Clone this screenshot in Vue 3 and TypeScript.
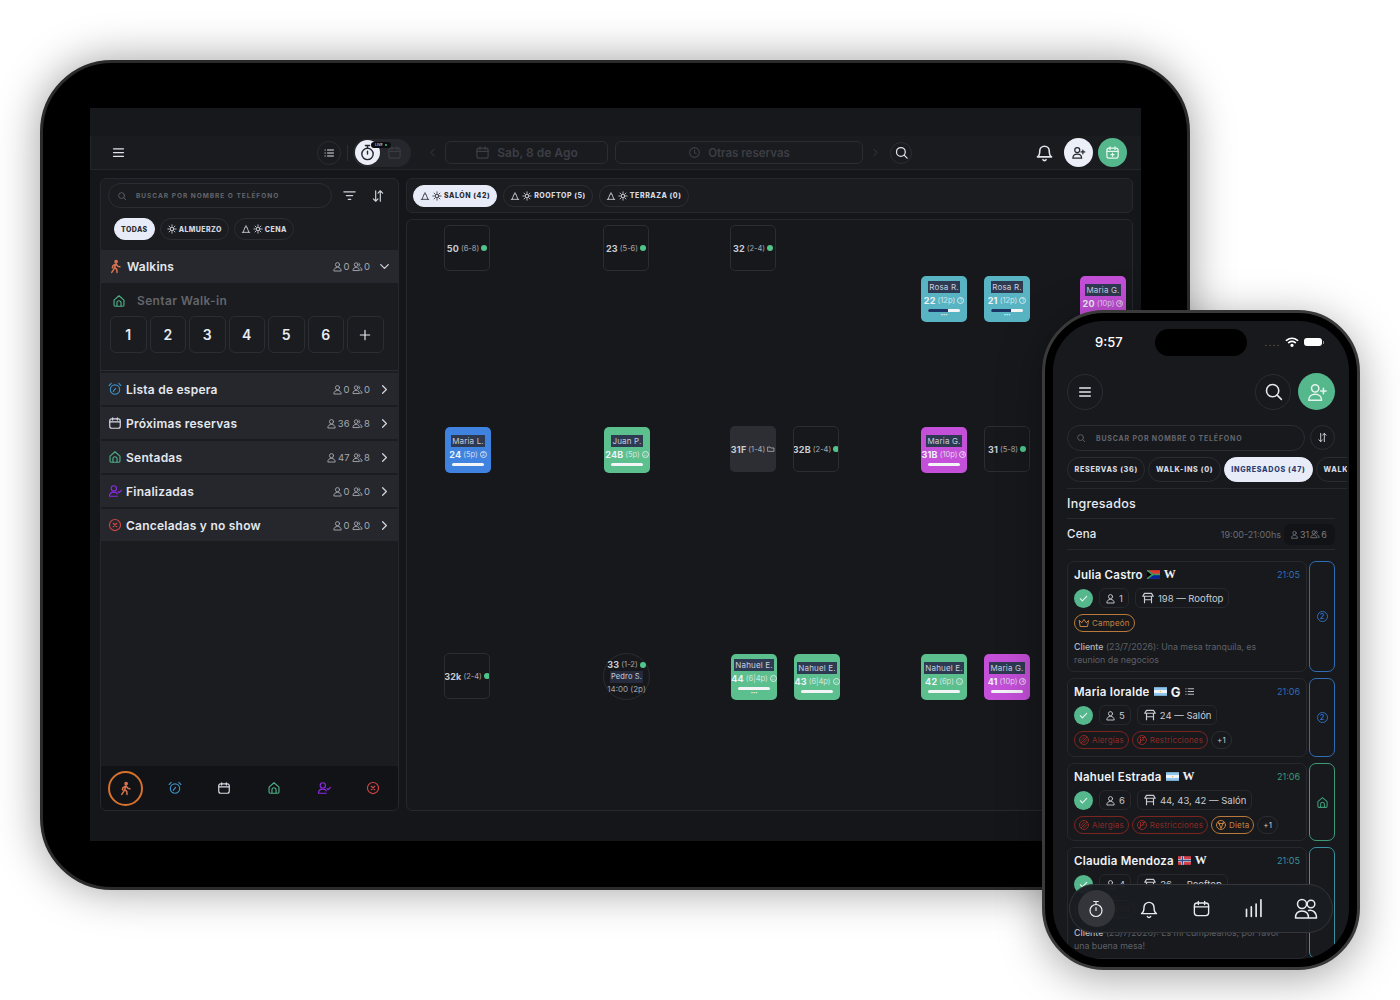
<script setup lang="ts">
import { h, type FunctionalComponent } from 'vue'

const paths: Record<string, string> = {
  menu: '<path d="M4 6h16M4 12h16M4 18h16"/>',
  list: '<path d="M9 6h12M9 12h12M9 18h12M4 6h.5M4 12h.5M4 18h.5"/>',
  watch: '<circle cx="12" cy="14" r="8"/><path d="M12 14v-4M9 2h6M12 2v4"/>',
  calendar: '<rect x="3" y="5" width="18" height="16" rx="3.5"/><path d="M8 3v4M16 3v4M3 10h18"/>',
  calplus: '<rect x="3" y="5" width="18" height="16" rx="3.5"/><path d="M8 3v4M16 3v4M3 10h18M12 13v5M9.5 15.5h5"/>',
  clock: '<circle cx="12" cy="12" r="9"/><path d="M12 7v5l3 2"/>',
  bell: '<path d="M6 10a6 6 0 0 1 12 0c0 6 3 7.500 3 7.500H3S6 16 6 10zM10 21a2.200 2.200 0 0 0 4 0"/>',
  userplus: '<circle cx="10" cy="8" r="4"/><path d="M3 21c0-4 3-6.500 7-6.500s7 2.500 7 6.500zM19 8v6M16 11h6"/>',
  search: '<circle cx="11" cy="11" r="7"/><path d="M21 21l-4.800-4.800"/>',
  user: '<circle cx="12" cy="8" r="4.500"/><path d="M4 21c0-4.500 3.500-7 8-7s8 2.500 8 7z"/>',
  users: '<circle cx="9" cy="8" r="4"/><path d="M2 20c0-4 3-6 7-6s7 2 7 6zM15 4.500a4 4 0 0 1 0 7M18 14.500c2.500.7 4 2.500 4 5.500h-3"/>',
  walker: '<circle cx="13" cy="4" r="1.800" fill="currentColor"/><path d="M13 8l-2.500 5.500 3.500 3 .5 5M10.500 13.500L9 17l-3 4.500M12.500 8L8 10.500 7 14M13 8l2.500 3.500 3.500 1"/>',
  alarm: '<circle cx="12" cy="13" r="8"/><path d="M5.500 2.500L2 6M18.500 2.500L22 6M9 16l4-5"/>',
  home: '<path d="M3.500 10.500L12 3l8.500 7.500V19a2 2 0 0 1-2 2h-13a2 2 0 0 1-2-2zM8.500 21v-6a3.500 3.500 0 0 1 7 0v6"/>',
  usercheck: '<circle cx="10" cy="7.500" r="4.500"/><path d="M2.500 21c0-4.500 3-7 7.500-7 3 0 5 1 6 3M2.500 21H16M17 13l2 2 4-4"/>',
  xcircle: '<circle cx="12" cy="12" r="9.500"/><path d="M9 9l6 6M15 9l-6 6"/>',
  down: '<path d="M5 8.500l7 7 7-7"/>',
  right: '<path d="M8.500 5l7 7-7 7"/>',
  left: '<path d="M15.500 5l-7 7 7 7"/>',
  filter: '<path d="M3 6h18M7 12h10M10 18h4"/>',
  sort: '<path d="M8 3v18M4 17l4 4 4-4M16 21V3M12 7l4-4 4 4"/>',
  service: '<path d="M3 20h18M5 20L10 7h4l5 13M12 7V4"/>',
  sun: '<circle cx="12" cy="12" r="4"/><path d="M12 2v4M12 18v4M2 12h4M18 12h4M5 5l3 3M16 16l3 3M5 19l3-3M16 8l3-3"/>',
  table: '<path d="M6 4h12l3 5H3zM6 9v11M18 9v11M6 15h12"/>',
  crown: '<path d="M3 7l4.500 4.500L12 5l4.500 6.500L21 7l-2 12H5z"/>',
  check: '<path d="M5 12.500l4.500 4.500L19 7.500"/>',
  plus: '<path d="M12 4v16M4 12h16"/>',
  bars: '<path d="M4 21v-8M9.500 21V10M15 21V7M20.500 21V2"/>',
  friends: '<circle cx="8" cy="7" r="4.500"/><circle cx="17" cy="7" r="3.800"/><path d="M1.500 21c0-4.500 2.500-7 6.500-7s6.500 2.500 6.500 7zM14.500 13.500c4-1 8 1.500 8 7.500h-8"/>',
  alergy: '<circle cx="12" cy="12" r="9"/><path d="M6 18L18 6M6 13l7-7M11 18l7-7"/>',
  restrict: '<circle cx="12" cy="12" r="9"/><path d="M9 7v10M13 7h3M13 12h3M6 18L18 6"/>',
  diet: '<circle cx="12" cy="12" r="9"/><path d="M7 6l5 13 5-13M7 9h10"/>',
  folder: '<path d="M3 6h6l2 3h10v10H3z"/>',
}

const flags: Record<string, string> = {
  za: '<rect width="24" height="16" fill="#de3831"/><rect y="8" width="24" height="8" fill="#002395"/><path d="M0 0l10 8-10 8" fill="#000"/><path d="M0 0l11 8L0 16M11 8h13" fill="none" stroke="#3c9a5f" stroke-width="3"/>',
  ar: '<rect width="24" height="16" fill="#8fc5ec"/><rect y="5.300" width="24" height="5.400" fill="#f4f6fa"/><circle cx="12" cy="8" r="1.400" fill="#eac24f"/>',
  no: '<rect width="24" height="16" fill="#d2404a"/><path d="M0 8h24M8 0v16" stroke="#f2f2f2" stroke-width="5"/><path d="M0 8h24M8 0v16" stroke="#2f4c86" stroke-width="2.600"/>',
}

const Ico: FunctionalComponent<{ name: string; size?: number; sw?: number }> = (p) =>
  h('svg', {
    width: p.size ?? 12,
    height: p.size ?? 12,
    viewBox: '0 0 24 24',
    fill: 'none',
    stroke: 'currentColor',
    'stroke-width': p.sw ?? 2,
    'stroke-linecap': 'round',
    'stroke-linejoin': 'round',
    innerHTML: paths[p.name],
  })

const Flag: FunctionalComponent<{ code: string }> = (p) =>
  h('svg', { width: 13, height: 9, viewBox: '0 0 24 16', innerHTML: flags[p.code] })

interface Row {
  label: string
  icon: string
  color: string
  people: number
  groups: number
}

const rows: Row[] = [
  { label: 'Lista de espera', icon: 'alarm', color: '#3d8fc4', people: 0, groups: 0 },
  { label: 'Próximas reservas', icon: 'calendar', color: '#d7dbe6', people: 36, groups: 8 },
  { label: 'Sentadas', icon: 'home', color: '#4fae85', people: 47, groups: 8 },
  { label: 'Finalizadas', icon: 'usercheck', color: '#8a2be2', people: 0, groups: 0 },
  { label: 'Canceladas y no show', icon: 'xcircle', color: '#d24545', people: 0, groups: 0 },
]

const navIcons = [
  { icon: 'alarm', color: '#3d8fc4' },
  { icon: 'calendar', color: '#d7dbe6' },
  { icon: 'home', color: '#4fae85' },
  { icon: 'usercheck', color: '#8a2be2' },
  { icon: 'xcircle', color: '#d24545' },
]

interface Tile {
  x: number
  y: number
  num: string
  cap: string
  kind: 'free' | 'blocked' | 'teal' | 'pink' | 'blue' | 'green'
  name?: string
  mark?: string
  dots?: boolean
}

const tiles: Tile[] = [
  { x: 444, y: 225, num: '50', cap: '(6-8)', kind: 'free' },
  { x: 603, y: 225, num: '23', cap: '(5-6)', kind: 'free' },
  { x: 730, y: 225, num: '32', cap: '(2-4)', kind: 'free' },
  { x: 921, y: 276, num: '22', cap: '(12p)', kind: 'teal', name: 'Rosa R.', mark: '1', dots: true },
  { x: 984, y: 276, num: '21', cap: '(12p)', kind: 'teal', name: 'Rosa R.', mark: '1', dots: true },
  { x: 1080, y: 276, num: '20', cap: '(10p)', kind: 'pink', name: 'Maria G.', mark: '4' },
  { x: 445, y: 427, num: '24', cap: '(5p)', kind: 'blue', name: 'Maria L.', mark: '2' },
  { x: 604, y: 427, num: '24B', cap: '(5p)', kind: 'green', name: 'Juan P.', mark: '⌂' },
  { x: 730, y: 426, num: '31F', cap: '(1-4)', kind: 'blocked' },
  { x: 793, y: 426, num: '32B', cap: '(2-4)', kind: 'free' },
  { x: 921, y: 427, num: '31B', cap: '(10p)', kind: 'pink', name: 'Maria G.', mark: '4' },
  { x: 984, y: 426, num: '31', cap: '(5-8)', kind: 'free' },
  { x: 444, y: 653, num: '32k', cap: '(2-4)', kind: 'free' },
  { x: 731, y: 654, num: '44', cap: '(6|4p)', kind: 'green', name: 'Nahuel E.', mark: '⌂', dots: true },
  { x: 794, y: 654, num: '43', cap: '(6|4p)', kind: 'green', name: 'Nahuel E.', mark: '⌂' },
  { x: 921, y: 654, num: '42', cap: '(6p)', kind: 'green', name: 'Nahuel E.', mark: '⌂' },
  { x: 984, y: 654, num: '41', cap: '(10p)', kind: 'pink', name: 'Maria G.', mark: '4' },
]

interface Tag {
  text: string
  icon?: string
  tone: 'red' | 'orange' | 'plain'
}

interface Booking {
  name: string
  flag: string
  source: string
  list?: boolean
  time: string
  tone: string
  party: number
  table: string
  tags: Tag[]
  note?: string
  height: number
  side: 'two' | 'home' | 'none'
}

const alergias: Tag = { text: 'Alergias', icon: 'alergy', tone: 'red' }
const restricciones: Tag = { text: 'Restricciones', icon: 'restrict', tone: 'red' }

const bookings: Booking[] = [
  {
    name: 'Julia Castro', flag: 'za', source: 'W', time: '21:05', tone: '#2f6db5', party: 1, table: '198 — Rooftop',
    tags: [{ text: 'Campeón', icon: 'crown', tone: 'orange' }],
    note: '(23/7/2026): Una mesa tranquila, es reunion de negocios', height: 111, side: 'two',
  },
  {
    name: 'Maria Ioralde', flag: 'ar', source: 'G', list: true, time: '21:06', tone: '#2f6db5', party: 5, table: '24 — Salón',
    tags: [alergias, restricciones, { text: '+1', tone: 'plain' }], height: 79, side: 'two',
  },
  {
    name: 'Nahuel Estrada', flag: 'ar', source: 'W', time: '21:06', tone: '#3f9a75', party: 6, table: '44, 43, 42 — Salón',
    tags: [alergias, restricciones, { text: 'Dieta', icon: 'diet', tone: 'orange' }, { text: '+1', tone: 'plain' }],
    height: 78, side: 'home',
  },
  {
    name: 'Claudia Mendoza', flag: 'no', source: 'W', time: '21:05', tone: '#3a8f9c', party: 4, table: '26 — Rooftop',
    tags: [{ text: 'Campeón', icon: 'crown', tone: 'orange' }],
    note: '(23/7/2026): Es mi cumpleaños, por favor una buena mesa!', height: 112, side: 'none',
  },
]
</script>

<template>
  <div class="stage">
    <div class="tablet">
      <div class="screen">
        <div class="strip"></div>
        <header class="bar">
          <span class="bar-menu"><Ico name="menu" :size="15" /></span>
          <span class="ring"><Ico name="list" :size="12" /></span>
          <span class="vline"></span>
          <div class="toggle">
            <span class="toggle-on"><Ico name="watch" :size="17" /></span>
            <span class="live">LIVE <i></i></span>
            <Ico class="dim" name="calendar" :size="15" />
          </div>
          <Ico class="dim nav-left" name="left" :size="11" />
          <div class="dim-field date"><Ico name="calendar" :size="15" /> Sab, 8 de Ago</div>
          <div class="dim-field other"><Ico name="clock" :size="13" /> Otras reservas</div>
          <Ico class="dim nav-right" name="right" :size="11" />
          <span class="ring search-ring"><Ico name="search" :size="15" /></span>
          <span class="bell"><Ico name="bell" :size="19" /></span>
          <span class="round white"><Ico name="userplus" :size="15" /></span>
          <span class="round mint"><Ico name="calplus" :size="15" /></span>
        </header>

        <div class="body">
          <aside class="side">
            <div class="find">
              <div class="find-input"><Ico name="search" :size="10" /><span>BUSCAR POR NOMBRE O TELÉFONO</span></div>
              <Ico class="find-icon" name="filter" :size="15" />
              <Ico class="find-icon sort" name="sort" :size="14" />
            </div>
            <div class="chips">
              <span class="chip on">TODAS</span>
              <span class="chip"><Ico name="sun" :size="10" />ALMUERZO</span>
              <span class="chip"><Ico name="service" :size="10" /><Ico name="sun" :size="10" />CENA</span>
            </div>

            <div class="row head">
              <Ico name="walker" :size="15" class="walker" :sw="2.4" />
              <span class="row-label">Walkins</span>
              <span class="count"><Ico name="user" :size="11" />0<Ico name="users" :size="11" />0</span>
              <Ico class="chev" name="down" :size="13" />
            </div>
            <div class="walkin">
              <div class="walkin-title"><Ico name="home" :size="14" />Sentar Walk-in</div>
              <div class="nums">
                <span v-for="n in 6" :key="n" class="num">{{ n }}</span>
                <span class="num"><Ico name="plus" :size="14" /></span>
              </div>
            </div>

            <div class="rows">
              <div v-for="r in rows" :key="r.label" class="row">
                <Ico :name="r.icon" :size="14" :style="{ color: r.color }" />
                <span class="row-label">{{ r.label }}</span>
                <span class="count"><Ico name="user" :size="11" />{{ r.people }}<Ico name="users" :size="11" />{{ r.groups }}</span>
                <Ico class="chev" name="right" :size="13" />
              </div>
            </div>

            <nav class="side-nav">
              <span class="walk-on"><Ico name="walker" :size="15" class="walker" :sw="2.4" /></span>
              <span v-for="n in navIcons" :key="n.icon" class="nav-cell">
                <Ico :name="n.icon" :size="14" :style="{ color: n.color }" />
              </span>
            </nav>
          </aside>

          <main class="main">
            <div class="zones">
              <span class="chip on"><Ico name="service" :size="10" /><Ico name="sun" :size="10" />SALÓN (42)</span>
              <span class="chip"><Ico name="service" :size="10" /><Ico name="sun" :size="10" />ROOFTOP (5)</span>
              <span class="chip"><Ico name="service" :size="10" /><Ico name="sun" :size="10" />TERRAZA (0)</span>
            </div>
            <div class="floor">
              <div
                v-for="t in tiles"
                :key="t.num + t.x"
                class="tile"
                :class="t.kind"
                :style="{ left: t.x - 407 + 'px', top: t.y - 220 + 'px' }"
              >
                <template v-if="t.name">
                  <span class="tile-name">{{ t.name }}</span>
                  <span class="tile-line"><b>{{ t.num }}</b> <small>{{ t.cap }}</small> <em>{{ t.mark }}</em></span>
                  <span class="tile-bar"><i v-if="t.kind === 'teal'"></i></span>
                  <span v-if="t.dots" class="tile-dots">•••</span>
                </template>
                <span v-else class="tile-line plain">
                  <b>{{ t.num }}</b> <small>{{ t.cap }}</small>
                  <Ico v-if="t.kind === 'blocked'" name="folder" :size="8" />
                  <i v-else class="dot"></i>
                </span>
              </div>
              <div class="tile-round">
                <span class="tile-line plain"><b>33</b> <small>(1-2)</small> <i class="dot"></i></span>
                <span class="tile-name soft">Pedro S.</span>
                <span class="round-time">14:00 (2p)</span>
              </div>
            </div>
          </main>
        </div>
      </div>
    </div>

    <div class="phone">
      <div class="phone-screen">
        <div class="status">
          <span class="clock">9:57</span>
          <span class="island"></span>
          <span class="signal">....</span>
          <svg width="14" height="10" viewBox="0 0 24 18" fill="none" stroke="#fff" stroke-width="3" stroke-linecap="round">
            <path d="M2 6c6-5 14-5 20 0M6 10c4-3 8-3 12 0" />
            <circle cx="12" cy="15" r="1.500" fill="#fff" />
          </svg>
          <span class="battery"></span>
        </div>

        <div class="p-head">
          <span class="p-ring"><Ico name="menu" :size="16" /></span>
          <span class="p-ring push"><Ico name="search" :size="21" :sw="1.8" /></span>
          <span class="p-mint"><Ico name="userplus" :size="22" :sw="1.7" /></span>
        </div>

        <div class="p-find">
          <div class="p-input"><Ico name="search" :size="10" /><span>BUSCAR POR NOMBRE O TELÉFONO</span></div>
          <span class="p-sort"><Ico name="sort" :size="11" /></span>
        </div>

        <div class="p-chips">
          <span class="p-chip">RESERVAS (36)</span>
          <span class="p-chip">WALK-INS (0)</span>
          <span class="p-chip on">INGRESADOS (47)</span>
          <span class="p-chip last">WALK</span>
        </div>

        <h2 class="p-title">Ingresados</h2>
        <div class="p-shift">
          <span class="p-shift-name">Cena</span>
          <span class="p-shift-time">19:00-21:00hs</span>
          <span class="p-shift-count"><Ico name="user" :size="9" />31 <Ico name="users" :size="10" />6</span>
        </div>

        <div class="cards">
          <div v-for="b in bookings" :key="b.name" class="line" :style="{ height: b.height + 'px' }">
            <article class="card">
              <div class="card-top">
                <span class="card-name">{{ b.name }}</span>
                <Flag :code="b.flag" />
                <span class="source" :class="{ google: b.source === 'G' }">{{ b.source }}</span>
                <Ico v-if="b.list" class="card-list" name="list" :size="11" />
                <span class="card-time" :style="{ color: b.tone }">{{ b.time }}</span>
              </div>
              <div class="card-meta">
                <span class="tick"><Ico name="check" :size="11" :sw="2.4" /></span>
                <span class="meta"><Ico name="user" :size="11" />{{ b.party }}</span>
                <span class="meta"><Ico name="table" :size="14" />{{ b.table }}</span>
              </div>
              <div class="card-tags">
                <span v-for="t in b.tags" :key="t.text" class="tag" :class="t.tone">
                  <Ico v-if="t.icon" :name="t.icon" :size="12" />{{ t.text }}
                </span>
              </div>
              <p v-if="b.note" class="note"><b>Cliente</b> {{ b.note }}</p>
            </article>
            <div class="side-tab" :style="{ color: b.tone, borderColor: b.tone }">
              <span v-if="b.side === 'two'" class="two">2</span>
              <Ico v-else-if="b.side === 'home'" name="home" :size="13" />
            </div>
          </div>
        </div>

        <nav class="p-nav">
          <span class="p-nav-cell"><span class="p-nav-on"><Ico name="watch" :size="18" :sw="1.6" /></span></span>
          <span class="p-nav-cell"><Ico name="bell" :size="20" :sw="1.7" /></span>
          <span class="p-nav-cell"><Ico name="calendar" :size="19" :sw="1.7" /></span>
          <span class="p-nav-cell"><Ico name="bars" :size="21" :sw="1.9" /></span>
          <span class="p-nav-cell"><Ico name="friends" :size="24" :sw="1.5" /></span>
        </nav>
      </div>
    </div>
  </div>
</template>

<style>
html,
body {
  margin: 0;
  background: #fff;
}
</style>

<style scoped>
.stage {
  position: relative;
  width: 1400px;
  height: 1000px;
  overflow: hidden;
  background: #fff;
  font-family: Inter, "Liberation Sans", sans-serif;
  color: #e8ebf2;
}

svg {
  flex: none;
  display: block;
}

/* tablet */
.tablet {
  position: absolute;
  left: 40px;
  top: 60px;
  width: 1150px;
  height: 830px;
  box-sizing: border-box;
  padding: 45px 46px 46px 47px;
  background: #000;
  border: 3px solid #2b2b2c;
  border-radius: 72px;
  box-shadow: 0 0 44px rgba(0, 0, 0, 0.38);
}

.screen {
  display: flex;
  flex-direction: column;
  height: 733px;
  background: #14161a;
}

.strip {
  height: 28px;
  background: #16181c;
}

.bar {
  display: flex;
  align-items: center;
  height: 34px;
  flex: none;
  background: #191b1f;
  border-bottom: 1px solid #24262b;
  border-left: 1px solid #24262b;
  box-sizing: border-box;
  color: #dfe3ec;
}

.bar-menu {
  margin-left: 20px;
  margin-right: 191px;
}

.ring {
  display: flex;
  align-items: center;
  justify-content: center;
  width: 24px;
  height: 24px;
  border: 1px solid #2b2d32;
  border-radius: 50%;
  box-sizing: border-box;
}

.vline {
  width: 1px;
  height: 16px;
  margin: 0 5px 0 6px;
  background: #2b2d32;
}

.toggle {
  position: relative;
  display: flex;
  align-items: center;
  width: 58px;
  height: 28px;
  padding-left: 2px;
  box-sizing: border-box;
  background: #25272c;
  border-radius: 14px;
}

.toggle-on {
  display: flex;
  align-items: center;
  justify-content: center;
  width: 25px;
  height: 25px;
  margin-right: 7px;
  background: #eceff8;
  border-radius: 50%;
  color: #24262b;
}

.live {
  position: absolute;
  left: 18px;
  top: 3px;
  display: flex;
  align-items: center;
  gap: 2px;
  padding: 1px 4px;
  background: #0c0d10;
  border-radius: 5px;
  font-size: 3.500px;
  font-weight: 600;
  color: #c8ccd5;
}

.live i {
  width: 2px;
  height: 2px;
  background: #4fbf8c;
  border-radius: 50%;
}

.dim {
  color: #3a3c42;
}

.nav-left {
  margin: 0 7px 0 16px;
}

.nav-right {
  margin: 0 9px 0 7px;
}

.dim-field {
  display: flex;
  align-items: center;
  justify-content: center;
  gap: 7px;
  height: 23px;
  box-sizing: border-box;
  border: 1px solid #2b2d32;
  border-radius: 6px;
  font-size: 11.500px;
  font-weight: 600;
  color: #3c3e44;
}

.date {
  width: 163px;
  margin-right: 7px;
  font-size: 12px;
}

.other {
  width: 248px;
}

.search-ring {
  width: 22px;
  height: 22px;
}

.bell {
  margin: 0 7px 0 auto;
}

.round {
  display: flex;
  align-items: center;
  justify-content: center;
  width: 29px;
  height: 29px;
  border-radius: 50%;
  margin-left: 5px;
}

.bell + .round {
  margin-left: 3px;
}

.white {
  background: #eceff8;
  color: #25272c;
}

.mint {
  margin-right: 14px;
  background: #55b78c;
  color: #e4f5ed;
}

.body {
  display: grid;
  grid-template-columns: 299px 727px;
  gap: 7px;
  flex: 1;
  min-height: 0;
  padding: 8px 8px 30px 10px;
}

.side {
  display: flex;
  flex-direction: column;
  background: #1a1c20;
  border: 1px solid #26282d;
  border-radius: 6px;
  overflow: hidden;
}

.find {
  display: flex;
  align-items: center;
  height: 25px;
  margin: 4px 0 0 7px;
  flex: none;
  color: #cdd1da;
}

.find-input {
  display: flex;
  align-items: center;
  gap: 9px;
  width: 224px;
  height: 25px;
  box-sizing: border-box;
  padding-left: 8px;
  border: 1px solid #2b2d32;
  border-radius: 13px;
  color: #64666c;
  font-size: 6.500px;
  font-weight: 700;
  letter-spacing: 0.155em;
}

.find-icon {
  margin-left: 10px;
}

.find-icon.sort {
  margin-left: 14px;
}

.chips {
  display: flex;
  gap: 5px;
  height: 22px;
  margin: 10px 0 10px 13px;
  flex: none;
}

.chip {
  display: flex;
  align-items: center;
  gap: 2px;
  height: 22px;
  padding: 0 6px;
  box-sizing: border-box;
  border: 1px solid #2b2d32;
  border-radius: 11px;
  font-size: 7px;
  font-weight: 800;
  letter-spacing: 0.06em;
  color: #d5d8e0;
}

.chip.on {
  background: #e8ecf8;
  border-color: #e8ecf8;
  color: #2b2d33;
}

.row {
  display: flex;
  align-items: center;
  height: 32px;
  padding: 0 7px;
  background: #25272c;
  color: #e4e7ee;
}

.row.head {
  height: 33px;
  flex: none;
  background: #26282d;
}

.row-label {
  margin-left: 4px;
  font-size: 12px;
  font-weight: 600;
  letter-spacing: 0.02em;
}

.count {
  display: flex;
  align-items: center;
  gap: 1px;
  margin-left: auto;
  font-size: 9.500px;
  color: #a6a9b1;
}

.count svg:last-child {
  margin-left: 1.500px;
}

.chev {
  margin-left: 8px;
  color: #cfd2da;
  stroke-width: 2.4;
}

.walker {
  color: #d8734f;
}

.walkin {
  height: 88px;
  flex: none;
  box-sizing: border-box;
  padding: 10px 0 0 9px;
  border-bottom: 1px solid #2a2c31;
}

.walkin-title {
  display: flex;
  align-items: center;
  gap: 11px;
  margin-left: 2px;
  font-size: 12px;
  font-weight: 600;
  letter-spacing: 0.03em;
  color: #63656b;
}

.walkin-title svg {
  color: #4fae85;
}

.nums {
  display: flex;
  gap: 3px;
  margin-top: 8px;
}

.num {
  display: flex;
  align-items: center;
  justify-content: center;
  width: 36.500px;
  height: 37px;
  box-sizing: border-box;
  border: 1px solid #2b2d32;
  border-radius: 6px;
  font-size: 14px;
  font-weight: 600;
}

.rows {
  display: flex;
  flex-direction: column;
  gap: 2px;
  margin-top: 2px;
  flex: none;
}

.side-nav {
  display: flex;
  align-items: center;
  height: 44px;
  flex: none;
  margin-top: auto;
  padding-left: 7px;
  background: #111316;
}

.walk-on {
  display: flex;
  align-items: center;
  justify-content: center;
  width: 35px;
  height: 35px;
  box-sizing: border-box;
  border: 2px solid #d8712c;
  border-radius: 50%;
  margin-right: 7px;
}

.nav-cell {
  display: flex;
  justify-content: center;
  width: 49.600px;
}

.main {
  display: flex;
  flex-direction: column;
  gap: 6px;
  min-height: 0;
}

.zones {
  display: flex;
  align-items: center;
  gap: 6px;
  height: 35px;
  flex: none;
  box-sizing: border-box;
  padding-left: 6px;
  background: #1a1c20;
  border: 1px solid #26282d;
  border-radius: 6px;
}

.zones .chip {
  letter-spacing: 0.08em;
}

.floor {
  position: relative;
  flex: 1;
  background: #16181c;
  border: 1px solid #26282d;
  border-radius: 6px;
}

.tile {
  position: absolute;
  display: flex;
  flex-direction: column;
  align-items: center;
  justify-content: center;
  width: 46px;
  height: 46px;
  box-sizing: border-box;
  border-radius: 5px;
  color: #fff;
  overflow: hidden;
  white-space: nowrap;
}

.tile.free {
  border: 1px solid #2b2d32;
}

.tile.blocked {
  background: #2c2e33;
}

.teal {
  background: #58b4c3;
}

.pink {
  background: #c44fd8;
}

.blue {
  background: #3f82df;
}

.green {
  background: #5bbf8e;
}

.tile-name {
  padding: 1px;
  background: #2e3a52;
  font-size: 8px;
  line-height: 10px;
  letter-spacing: 0.02em;
  color: #c9cedc;
}

.tile-name.soft {
  background: #252b3c;
  font-size: 7.500px;
}

.tile-line {
  display: flex;
  align-items: center;
  gap: 2px;
  margin-top: 2px;
  font-size: 9px;
  color: #eef2f6;
}

.tile-line b {
  font-weight: 700;
  letter-spacing: 0.02em;
}

.tile-line small {
  font-size: 7.500px;
  opacity: 0.8;
}

.tile-line em {
  display: flex;
  align-items: center;
  justify-content: center;
  width: 7px;
  height: 7px;
  box-sizing: border-box;
  border: 0.800px solid currentColor;
  border-radius: 50%;
  font-size: 5px;
  font-style: normal;
  opacity: 0.85;
}

.tile-line.plain {
  margin-top: 0;
  color: #c9ccd3;
}

.dot {
  width: 6px;
  height: 6px;
  background: #4fc58c;
  border-radius: 50%;
}

.tile-bar {
  display: block;
  width: 32px;
  height: 3px;
  margin-top: 3px;
  background: #f2f4f6;
  border-radius: 2px;
  overflow: hidden;
}

.tile-bar i {
  display: block;
  width: 20px;
  height: 3px;
  background: #1d3566;
}

.tile-dots {
  font-size: 4px;
  line-height: 6px;
  color: #f2f4f6;
}

.tile-round {
  position: absolute;
  left: 196px;
  top: 433px;
  display: flex;
  flex-direction: column;
  align-items: center;
  justify-content: center;
  gap: 1px;
  width: 47px;
  height: 47px;
  box-sizing: border-box;
  border: 1px solid #2b2d32;
  border-radius: 50%;
  white-space: nowrap;
}

.round-time {
  font-size: 8px;
  color: #9fa2a9;
}

/* phone */
.phone {
  position: absolute;
  left: 1042px;
  top: 310px;
  width: 318px;
  height: 660px;
  box-sizing: border-box;
  padding: 8px;
  background: #000;
  border: 3px solid #3a3a3b;
  border-radius: 62px;
  box-shadow: 0 8px 44px rgba(0, 0, 0, 0.35);
}

.phone-screen {
  position: relative;
  height: 100%;
  box-sizing: border-box;
  padding: 0 0 0 14px;
  background: #17191d;
  border-radius: 50px;
  overflow: hidden;
}

.status {
  display: flex;
  align-items: center;
  height: 42px;
  box-sizing: border-box;
}

.clock {
  margin-left: 28px;
  font-size: 13px;
  font-weight: 500;
  color: #fff;
}

.island {
  width: 92px;
  height: 27px;
  margin-left: 32px;
  background: #000;
  border-radius: 14px;
}

.signal {
  margin: 0 4px 0 18px;
  font-size: 9px;
  letter-spacing: 1.500px;
  color: #5b5d62;
}

.battery {
  position: relative;
  width: 18px;
  height: 8px;
  margin-left: 5px;
  background: #fff;
  border-radius: 3px;
}

.battery::after {
  content: "";
  position: absolute;
  left: 19px;
  top: 2.500px;
  width: 1px;
  height: 3px;
  background: #8a8c90;
}

.p-head {
  display: flex;
  align-items: center;
  gap: 7px;
  width: 268px;
  margin-top: 10px;
  color: #e4e7ee;
}

.p-ring {
  display: flex;
  align-items: center;
  justify-content: center;
  width: 36px;
  height: 36px;
  box-sizing: border-box;
  border: 1px solid #2b2d32;
  border-radius: 50%;
}

.push {
  margin-left: auto;
}

.p-mint {
  display: flex;
  align-items: center;
  justify-content: center;
  width: 37px;
  height: 37px;
  background: #55b78c;
  border-radius: 50%;
  color: #e4f5ed;
}

.p-find {
  display: flex;
  gap: 5px;
  width: 268px;
  margin-top: 15px;
}

.p-input {
  display: flex;
  align-items: center;
  gap: 10px;
  width: 238px;
  height: 26px;
  box-sizing: border-box;
  padding-left: 8px;
  border: 1px solid #2b2d32;
  border-radius: 13px;
  color: #64666c;
  font-size: 7px;
  font-weight: 700;
  letter-spacing: 0.115em;
}

.p-sort {
  display: flex;
  align-items: center;
  justify-content: center;
  width: 25px;
  height: 25px;
  box-sizing: border-box;
  border: 1px solid #2b2d32;
  border-radius: 50%;
  color: #d5d8e0;
}

.p-chips {
  display: flex;
  gap: 3px;
  width: 280px;
  margin-top: 6px;
  padding-bottom: 6px;
  overflow: hidden;
  border-bottom: 1px solid #26282d;
  white-space: nowrap;
}

.p-chip {
  display: flex;
  align-items: center;
  height: 25px;
  flex: none;
  box-sizing: border-box;
  padding: 0 6.500px;
  border: 1px solid #2b2d32;
  border-radius: 13px;
  font-size: 7.200px;
  font-weight: 800;
  letter-spacing: 0.095em;
  color: #d5d8e0;
}

.p-chip.on {
  background: #e8ecf8;
  border-color: #e8ecf8;
  color: #2b3b70;
}

.p-chip.last {
  width: 70px;
}

.p-title {
  width: 268px;
  margin: 0;
  padding: 7px 0;
  border-bottom: 1px solid #26282d;
  font-size: 12.500px;
  font-weight: 500;
  line-height: 15px;
  letter-spacing: 0.02em;
  color: #e8ebf2;
}

.p-shift {
  display: flex;
  align-items: center;
  width: 268px;
  height: 30px;
  border-bottom: 1px solid #26282d;
}

.p-shift-name {
  font-size: 11.500px;
  font-weight: 500;
  letter-spacing: 0.02em;
}

.p-shift-time {
  margin-left: auto;
  font-size: 9px;
  color: #6b6d73;
}

.p-shift-count {
  display: flex;
  align-items: center;
  gap: 1px;
  width: 51px;
  height: 21px;
  margin-left: 3px;
  padding-left: 6px;
  box-sizing: border-box;
  background: #111316;
  border-radius: 6px;
  font-size: 9px;
  color: #7c7e85;
}

.cards {
  display: flex;
  flex-direction: column;
  gap: 6px;
  width: 268px;
  margin-top: 11px;
}

.line {
  display: flex;
  gap: 2px;
  flex: none;
}

.card {
  flex: 1;
  min-width: 0;
  box-sizing: border-box;
  padding: 5px 6px 0;
  border: 1px solid #26282d;
  border-radius: 7px;
}

.card-top {
  display: flex;
  align-items: center;
  gap: 4px;
  height: 15px;
}

.card-name {
  font-size: 11.500px;
  font-weight: 600;
  letter-spacing: 0.02em;
  color: #f0f2f6;
}

.source {
  font-family: "Liberation Serif", serif;
  font-size: 12px;
  font-weight: 700;
  letter-spacing: -1px;
  color: #f0f2f6;
}

.source.google {
  font-family: Inter, sans-serif;
  font-size: 13px;
  letter-spacing: 0;
}

.card-list {
  color: #c9ccd3;
}

.card-time {
  margin-left: auto;
  font-size: 9px;
}

.card-meta {
  display: flex;
  align-items: center;
  gap: 6px;
  margin-top: 6px;
}

.tick {
  display: flex;
  align-items: center;
  justify-content: center;
  width: 19px;
  height: 19px;
  background: #55b78c;
  border-radius: 50%;
  color: #eaf7f0;
}

.meta {
  display: flex;
  align-items: center;
  gap: 3px;
  height: 20px;
  padding: 0 5px;
  box-sizing: border-box;
  border: 1px solid #26282d;
  border-radius: 6px;
  font-size: 9.500px;
  color: #c9ccd3;
}

.card-tags {
  display: flex;
  gap: 3px;
  margin-top: 6px;
}

.tag {
  display: flex;
  align-items: center;
  gap: 2px;
  height: 18px;
  padding: 0 4px 0 3px;
  box-sizing: border-box;
  border: 1px solid;
  border-radius: 9px;
  font-size: 8px;
  letter-spacing: 0.02em;
}

.tag.red {
  border-color: #7c2420;
  color: #8e2a25;
}

.tag.orange {
  border-color: #b8793a;
  color: #c5813f;
}

.tag.plain {
  padding: 0 5px;
  border-color: #2b2d32;
  color: #c9ccd3;
}

.note {
  margin: 8px 18px 0 0;
  font-size: 8.800px;
  line-height: 13px;
  color: #5e6066;
}

.note b {
  font-weight: 500;
  color: #b5b8bf;
}

.side-tab {
  display: flex;
  align-items: center;
  justify-content: center;
  width: 26px;
  flex: none;
  box-sizing: border-box;
  border: 1px solid;
  border-radius: 7px;
}

.two {
  display: flex;
  align-items: center;
  justify-content: center;
  width: 11px;
  height: 11px;
  box-sizing: border-box;
  border: 1px solid currentColor;
  border-radius: 50%;
  font-size: 7.500px;
  font-weight: 600;
}

.p-nav {
  position: absolute;
  left: 16px;
  top: 563px;
  display: flex;
  align-items: center;
  width: 264px;
  height: 49px;
  box-sizing: border-box;
  background: rgba(26, 28, 32, 0.96);
  border: 1px solid #34363a;
  border-radius: 25px;
  color: #e8ebf2;
}

.p-nav-cell {
  display: flex;
  align-items: center;
  justify-content: center;
  width: 52.500px;
}

.p-nav-on {
  display: flex;
  align-items: center;
  justify-content: center;
  width: 37px;
  height: 37px;
  background: #33353a;
  border-radius: 50%;
}
</style>
